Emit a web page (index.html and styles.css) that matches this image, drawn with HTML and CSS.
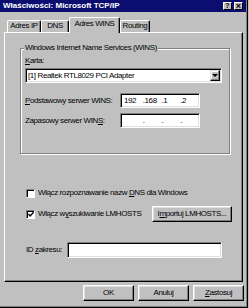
FILE: index.html
```html
<!DOCTYPE html>
<html lang="pl">
<head>
  <meta charset="UTF-8" />
  <title>Właściwości: Microsoft TCP/IP</title>
  <link rel="stylesheet" href="styles.css">
</head>
<body>
  <div class="window">
    <div class="titlebar">
      <span class="title">Właściwości: Microsoft TCP/IP</span>
      <span class="tbtn">?</span>
      <span class="tbtn close">×</span>
    </div>

    <div class="tabs">
      <div class="tab tab-ip">Adres IP</div>
      <div class="tab tab-dns">DNS</div>
      <div class="tab tab-wins active">Adres WINS</div>
      <div class="tab tab-routing">Routing</div>
    </div>

    <div class="panel">
      <div class="group">
        <span class="legend">Windows Internet Name Services (WINS)</span>
        <div class="label"><u>K</u>arta:</div>
        <div class="combo">
          <span class="combo-text">[1] Realtek RTL8029 PCI Adapter</span>
          <span class="combo-btn"><span class="arrow"></span></span>
        </div>
        <div class="field-row first">
          <span class="field-label"><u>P</u>odstawowy serwer WINS:</span>
          <div class="ip">
            <span class="oct">192</span>
            <span class="oct">.168</span>
            <span class="oct">.1</span>
            <span class="oct">.2</span>
          </div>
        </div>
        <div class="field-row">
          <span class="field-label">Zapasowy serwer WIN<u>S</u>:</span>
          <div class="ip">
            <span class="oct"></span>
            <span class="oct">.</span>
            <span class="oct">.</span>
            <span class="oct">.</span>
          </div>
        </div>
      </div>

      <div class="check-row first">
        <span class="checkbox"></span>
        <span>Włącz rozpoznawanie nazw <u>D</u>NS dla Windows</span>
      </div>
      <div class="check-row second">
        <span class="check-label">
          <span class="checkbox">
            <svg width="7" height="7" viewBox="0 0 7 7"><polyline points="0.5,3 2.5,5.2 6.5,0.8" fill="none" stroke="#000" stroke-width="1.6"/></svg>
          </span>
          <span>Włącz w<u>y</u>szukiwanie LMHOSTS</span>
        </span>
        <span class="button import">I<u>m</u>portuj LMHOSTS...</span>
      </div>

      <div class="id-row">
        <span class="id-label">ID <u>z</u>akresu:</span>
        <span class="textbox"></span>
      </div>
    </div>

    <div class="buttons">
      <span class="button">OK</span>
      <span class="button">Anuluj</span>
      <span class="button"><u>Z</u>astosuj</span>
    </div>
  </div>
</body>
</html>
```

FILE: styles.css
```css
body {
  margin: 0;
  background-color: #c0c0c0;
  font-family: "Liberation Sans", Arial, sans-serif;
  font-size: 8px;
  line-height: 10px;
  letter-spacing: -0.4px;
  color: #000;
}
u {
  text-decoration-thickness: 1px;
  text-underline-offset: 1px;
}
.window {
  width: 248px;
  height: 308px;
  box-sizing: border-box;
  border-right: 1px solid #000;
  border-bottom: 1px solid #000;
  box-shadow: inset -1px -1px 0 #808080;
}
.titlebar {
  height: 12px;
  margin-right: 1px;
  background-color: #0b0d70;
  display: flex;
  align-items: center;
  padding: 0 3px 0 3px;
}
.title {
  flex: 1;
  color: #fff;
  font-weight: bold;
  letter-spacing: 0;
}
.tbtn {
  width: 9px;
  height: 8px;
  box-sizing: border-box;
  background-color: #c0c0c0;
  border: 1px solid;
  border-color: #fff #000 #000 #fff;
  font-size: 7px;
  line-height: 6px;
  font-weight: bold;
  text-align: center;
  letter-spacing: 0;
}
.tbtn.close {
  margin-left: 2px;
  font-size: 9px;
}

/* tabs */
.tabs {
  display: flex;
  align-items: flex-end;
  margin-top: 5px;
  padding-left: 7px;
}
.tab {
  height: 12px;
  box-sizing: border-box;
  border-top: 1px solid #fff;
  border-left: 1px solid #fff;
  border-right: 1px solid #000;
  border-top-left-radius: 2px;
  border-top-right-radius: 2px;
  box-shadow: inset -1px 0 0 #808080;
  text-align: center;
  line-height: 10px;
}
.tab-ip { width: 34px; }
.tab-dns { width: 28px; }
.tab-wins { width: 51px; }
.tab-routing { width: 30px; }
.tab.active {
  height: 16px;
  margin-bottom: -1px;
  position: relative;
  z-index: 1;
  background-color: #c0c0c0;
  line-height: 11px;
}

/* panel */
.panel {
  width: 239px;
  height: 250px;
  margin-left: 4px;
  box-sizing: border-box;
  border: 1px solid;
  border-color: #fff #000 #000 #fff;
  box-shadow: inset -1px -1px 0 #808080;
  padding-left: 15px;
  display: flex;
  flex-direction: column;
}
.group {
  position: relative;
  width: 210px;
  height: 106px;
  margin-top: 15px;
  box-sizing: border-box;
  border: 1px solid #808080;
  box-shadow: 1px 1px 0 #fff, inset 1px 1px 0 #fff;
  padding: 7px 7px 0 4px;
}
.legend {
  position: absolute;
  top: -6px;
  left: 3px;
  padding: 0 1px;
  background-color: #c0c0c0;
  white-space: nowrap;
}
.combo {
  height: 15px;
  margin-top: 2px;
  box-sizing: border-box;
  background-color: #fff;
  border: 1px solid;
  border-color: #808080 #fff #fff #808080;
  box-shadow: inset 1px 1px 0 #000, inset -1px -1px 0 #dfdfdf;
  display: flex;
  align-items: center;
  padding: 1px 1px 1px 2px;
}
.combo-text {
  flex: 1;
}
.combo-btn {
  width: 10px;
  height: 11px;
  box-sizing: border-box;
  background-color: #c0c0c0;
  border: 1px solid;
  border-color: #dfdfdf #000 #000 #dfdfdf;
  box-shadow: inset -1px -1px 0 #808080, inset 1px 1px 0 #fff;
  display: flex;
  align-items: center;
  justify-content: center;
}
.arrow {
  width: 0;
  height: 0;
  border-left: 3px solid transparent;
  border-right: 3px solid transparent;
  border-top: 3px solid #000;
}
.field-row {
  display: flex;
  align-items: center;
  margin-top: 5px;
  height: 15px;
}
.field-row.first {
  margin-top: 10px;
}
.field-label {
  width: 95px;
}
.ip {
  width: 80px;
  height: 15px;
  box-sizing: border-box;
  background-color: #fff;
  border: 1px solid;
  border-color: #808080 #fff #fff #808080;
  box-shadow: inset 1px 1px 0 #000, inset -1px -1px 0 #dfdfdf;
  display: flex;
  align-items: center;
  padding-left: 3px;
}
.oct {
  width: 20px;
  white-space: pre;
}

/* checkboxes */
.check-row {
  display: flex;
  align-items: center;
  padding-left: 6px;
  gap: 3px;
}
.check-row.first {
  margin-top: 34px;
  height: 10px;
}
.check-row.second {
  margin-top: 8px;
  height: 16px;
  gap: 0;
}
.check-label {
  width: 126px;
  display: flex;
  align-items: center;
  gap: 3px;
}
.checkbox {
  width: 9px;
  height: 9px;
  box-sizing: border-box;
  background-color: #fff;
  border: 1px solid;
  border-color: #808080 #fff #fff #808080;
  box-shadow: inset 1px 1px 0 #000;
  display: flex;
  align-items: center;
  justify-content: center;
}
.checkbox svg {
  display: block;
  margin: 1px 0 0 1px;
}
.button {
  height: 16px;
  box-sizing: border-box;
  background-color: #c0c0c0;
  border: 1px solid;
  border-color: #fff #000 #000 #fff;
  box-shadow: inset -1px -1px 0 #808080, inset 1px 1px 0 #dfdfdf;
  display: flex;
  align-items: center;
  justify-content: center;
}
.button.import {
  width: 80px;
}

/* scope id */
.id-row {
  display: flex;
  align-items: center;
  margin-top: 20px;
  padding-left: 6px;
  height: 16px;
}
.id-label {
  width: 41px;
}
.textbox {
  width: 155px;
  height: 16px;
  box-sizing: border-box;
  background-color: #fff;
  border: 1px solid;
  border-color: #808080 #fff #fff #808080;
  box-shadow: inset 1px 1px 0 #000, inset -1px -1px 0 #dfdfdf;
}

/* dialog buttons */
.buttons {
  display: flex;
  justify-content: flex-end;
  gap: 4px;
  margin-top: 3px;
  padding-right: 3px;
}
.buttons .button {
  width: 51px;
}
```
